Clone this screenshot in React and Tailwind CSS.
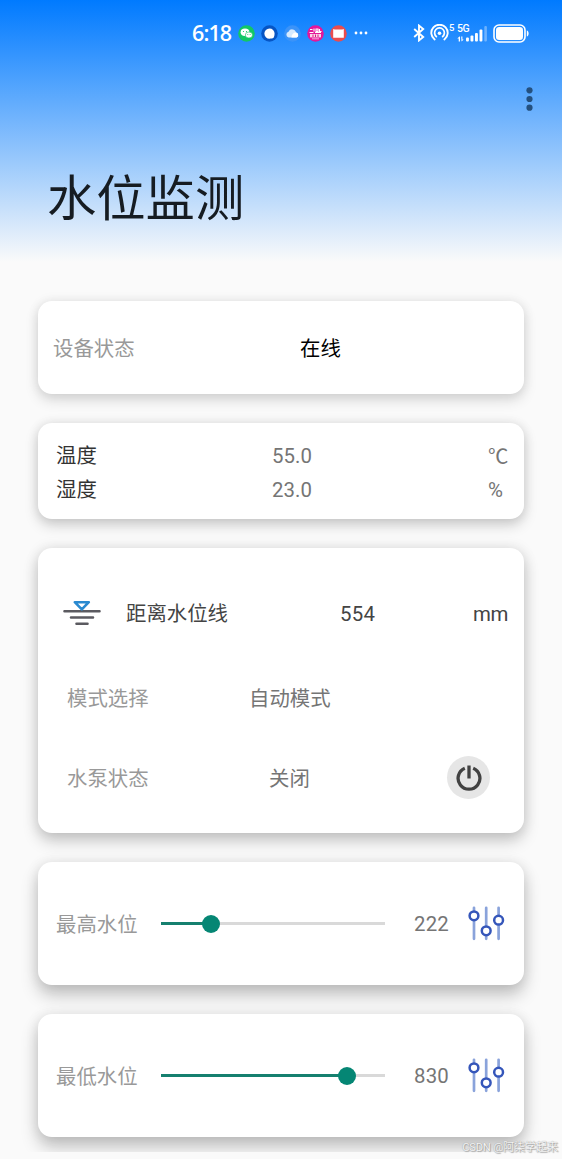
import clsx from 'clsx'

const sliders = [
  { label: '最高水位', value: 222 },
  { label: '最低水位', value: 830 },
]

const MAX_LEVEL = 1000

function StatusBar() {
  return (
    <div className="h-[66px] pl-[192px] pr-[32px] flex items-center text-white">
      <span className="w-[46px] font-['Open_Sans',sans-serif] text-[21.5px] leading-none font-semibold tracking-[-0.9px]">6:18</span>
      <div className="flex items-center gap-[6px]">
        {/* WeChat */}
        <svg className="w-[17px] h-[17px]" viewBox="0 0 17 17">
          <circle cx="8.5" cy="8.5" r="8.3" fill="#12c765" />
          <ellipse cx="7" cy="7.3" rx="4.4" ry="3.7" fill="#fff" />
          <ellipse cx="10.9" cy="10" rx="3.6" ry="3" fill="#fff" stroke="#12c765" strokeWidth="0.6" />
          <circle cx="5.5" cy="6.5" r="0.6" fill="#12c765" />
          <circle cx="8.5" cy="6.5" r="0.6" fill="#12c765" />
          <circle cx="9.8" cy="9.5" r="0.5" fill="#12c765" />
          <circle cx="12.1" cy="9.5" r="0.5" fill="#12c765" />
        </svg>
        <svg className="w-[17px] h-[17px]" viewBox="0 0 17 17">
          <circle cx="8.5" cy="8.5" r="8.3" fill="#0655c4" />
          <path d="M8.5 3.4a5.1 5.1 0 0 1 5.1 5.1c0 1.6-.3 3-1 4.3-1.1.8-2.5.9-4.1.9a5.1 5.1 0 0 1 0-10.3z" fill="#fff" />
        </svg>
        <svg className="w-[17px] h-[17px]" viewBox="0 0 17 17">
          <circle cx="8.5" cy="8.5" r="8.3" fill="#3b93f8" />
          <path d="M4.7 12.6a3 3 0 0 1-.2-5.8 4 4 0 0 1 7.6.8 2.6 2.6 0 0 1 .4 5z" fill="#d6eafe" />
          <path d="M7.5 12.6a4.5 4.5 0 0 1 4.6-5 2.6 2.6 0 0 1 .4 5z" fill="#fff" />
        </svg>
        <svg className="w-[17px] h-[17px]" viewBox="0 0 17 17">
          <circle cx="8.5" cy="8.5" r="8.3" fill="#e5179a" />
          <path d="M3 4.5h2.5M7 3.5v3M9 4h2v2.4H9zM12.5 4v2.5h2M2.5 7.5h4M8 7.5h6" fill="none" stroke="#fff" strokeWidth="1.1" />
          <path d="M3 9h11v3.4H3z" fill="#fbd3ec" />
          <path d="M6 9.5v2.5M8.5 9.5v2.5M11 9.5v2.5" stroke="#d81a76" strokeWidth="1" />
          <path d="M5 13.8h7" stroke="#f9a7d8" strokeWidth="1" />
        </svg>
        <svg className="w-[17px] h-[17px]" viewBox="0 0 17 17">
          <circle cx="8.5" cy="8.5" r="8.3" fill="#ea4c4e" />
          <path d="M3.2 4.1c1.2.4 2 .5 3 .5h4.6c1 0 1.8-.1 3-.5v8.6H3.2z" fill="#fff" />
        </svg>
      </div>
      <svg className="w-[14px] h-[4px] ml-[7px]" viewBox="0 0 14 4" fill="#fff">
        <circle cx="2" cy="2" r="1.4" />
        <circle cx="7" cy="2" r="1.4" />
        <circle cx="12" cy="2" r="1.4" />
      </svg>

      <div className="ml-auto flex items-center">
        <svg className="w-[12px] h-[18px]" viewBox="0 0 12 18" fill="none" stroke="#fff" strokeWidth="1.9">
          <path d="M1.2 5l9 8-4.2 3.4V1.6L10.2 5l-9 8" />
        </svg>
        <svg className="w-[19px] h-[18px] ml-[5px]" viewBox="0 0 19 18" fill="none" stroke="#fff" strokeLinecap="round">
          <path d="M4.6 15.5a8.2 8.2 0 1 1 9.8 0" strokeWidth="1.9" />
          <path d="M6.4 12.6a4.9 4.9 0 1 1 6.2 0" strokeWidth="1.7" />
          <circle cx="9.5" cy="9.2" r="1.8" fill="#fff" stroke="none" />
        </svg>
        <span className="w-[8px] h-[18px] text-[9.5px] leading-[8px] font-medium">5</span>
        <div className="w-[31px] flex flex-col">
          <span className="h-[9px] text-[10.5px] leading-[7px] font-medium tracking-[-0.5px]">5G</span>
          <svg className="w-[31px] h-[16px] -mt-[8px]" viewBox="0 0 31 16" fill="#fff">
            <path d="M2.5 10.5l-2.2 2h1.4v3H3v-5zM4.500 15.500l2.200-2H5.400v-3H4.200z" />
            <rect x="9" y="11.5" width="2.9" height="4" rx="1" />
            <rect x="13.5" y="9.5" width="2.9" height="6" rx="1" />
            <rect x="18" y="7" width="2.9" height="8.5" rx="1" />
            <rect x="22.5" y="3.5" width="2.9" height="12" rx="1" />
            <rect x="27.3" y="0" width="2.6" height="15.5" rx="1" opacity="0.35" />
          </svg>
        </div>
        <svg className="w-[37px] h-[19px] ml-[5px]" viewBox="0 0 37 19" fill="none">
          <rect x="1" y="1" width="31" height="17" rx="5" stroke="#fff" strokeWidth="1.6" />
          <rect x="3" y="3" width="27" height="13" rx="3.2" fill="#fff" />
          <path d="M33.8 6.5c2.4.4 2.4 5.6 0 6z" fill="#fff" />
        </svg>
      </div>
    </div>
  )
}

function Card({ className, children }) {
  return (
    <section className={clsx('bg-white rounded-[14px]', className)}>
      {children}
    </section>
  )
}

function WaterLevelIcon() {
  return (
    <svg className="w-[38px] h-[26px] -translate-y-px" viewBox="0 0 38 26" fill="none" strokeLinecap="round">
      <path d="M1.5 11.3h35M8 17.5h22M13.5 23.8h11" stroke="#5b5a60" strokeWidth="2.6" />
      <path d="M11.8 2.2h14L18.8 9.4z" stroke="#2a8ad0" strokeWidth="2.6" strokeLinejoin="round" />
    </svg>
  )
}

function PowerIcon() {
  return (
    <svg className="w-[26px] h-[26px]" viewBox="0 0 26 26" fill="none" stroke="#424242" strokeWidth="3.3">
      <path d="M8.8 3.2a10.9 10.9 0 1 0 8.4 0" />
      <path d="M13 .5v13" />
    </svg>
  )
}

function TuneIcon() {
  return (
    <svg className="w-[37px] h-[36px]" viewBox="0 0 37 36" fill="none">
      <path d="M6 1.8v31M18.2 1.8v31M30.6 1.8v31" stroke="#8aa3db" strokeWidth="2.7" strokeLinecap="round" />
      <g fill="#fff" stroke="#3556ba" strokeWidth="2.5">
        <circle cx="6" cy="9.8" r="4.4" />
        <circle cx="18.2" cy="24.8" r="4.4" />
        <circle cx="30.6" cy="14.2" r="4.4" />
      </g>
    </svg>
  )
}

function Slider({ value }) {
  const pct = `${(value / MAX_LEVEL) * 100}%`
  return (
    <div className="relative w-[224px] h-[18px] flex items-center">
      <div className="w-full h-[3px] bg-[#d9d9d9]">
        <div className="h-full bg-[#16806f]" style={{ width: pct }} />
      </div>
      <div className="absolute w-[18px] h-[18px] -translate-x-1/2 rounded-full bg-[#058674]" style={{ left: pct }} />
    </div>
  )
}

export default function App() {
  return (
    <div className="relative w-[562px] h-[1159px] overflow-hidden bg-[#fafafa] font-['Roboto','Noto_Sans_CJK_SC',sans-serif] text-[20.4px] leading-[34px]">
      <div className="h-[1152px] overflow-hidden bg-[linear-gradient(to_bottom,#007aff_0px,#fafafa_262px)] bg-[#fafafa]">
        <header className="h-[301px]">
          <StatusBar />
          <div className="h-[66px] pr-[29px] flex justify-end items-center">
            <svg className="w-[7px] h-[24px]" viewBox="0 0 7 24" fill="#24507f">
              <circle cx="3.5" cy="3.3" r="3.1" />
              <circle cx="3.5" cy="12" r="3.1" />
              <circle cx="3.5" cy="20.7" r="3.1" />
            </svg>
          </div>
          <h1 className="pl-[47px] pt-[31px] text-[49.3px] leading-[73px] text-[#161c22]">水位监测</h1>
        </header>

        <main className="mx-[38px] flex flex-col gap-[29px]">
          <Card className="h-[93px] pt-[2px] pl-[15px] flex items-center text-black shadow-[0_6px_14px_rgba(0,0,0,0.14),0_0_12px_rgba(0,0,0,0.08)]">
            <span className="w-[247px] text-[#999]">设备状态</span>
            <span>在线</span>
          </Card>

          <Card className="h-[96px] pt-[3px] pl-[18px] pr-[14px] flex flex-col justify-center text-[#757575] shadow-[0_6px_14px_rgba(0,0,0,0.18),0_0_12px_rgba(0,0,0,0.09)]">
            <div className="flex">
              <span className="w-[216px] text-[#333]">温度</span>
              <span className="tracking-[0.1px]">55.0</span>
              <span className="w-[22px] ml-auto font-['Noto_Sans_CJK_SC',sans-serif] -translate-y-px">℃</span>
            </div>
            <div className="flex">
              <span className="w-[216px] text-[#333]">湿度</span>
              <span className="tracking-[0.1px]">23.0</span>
              <span className="w-[22px] ml-auto">%</span>
            </div>
          </Card>

          <Card className="h-[285px] pt-[49px] text-[#757575] shadow-[0_8px_16px_rgba(0,0,0,0.2),0_0_14px_rgba(0,0,0,0.1)]">
            <div className="pl-[25px] pr-[16px] flex items-center text-[#444]">
              <WaterLevelIcon />
              <span className="w-[214px] ml-[25px]">距离水位线</span>
              <span className="tracking-[0.3px]">554</span>
              <span className="ml-auto tracking-[-0.4px]">mm</span>
            </div>
            <div className="mt-[51px] pl-[29px] flex items-center">
              <span className="w-[182px] text-[#999]">模式选择</span>
              <span>自动模式</span>
            </div>
            <div className="mt-[40px] pl-[29px] pr-[34px] flex items-center">
              <span className="w-[202px] pt-[2px] text-[#999]">水泵状态</span>
              <span className="pt-[2px]">关闭</span>
              <button className="w-[43px] h-[43px] ml-auto flex items-center justify-center rounded-full bg-[#e6e6e6]">
                <PowerIcon />
              </button>
            </div>
          </Card>

          {sliders.map(s => (
            <Card key={s.label} className="h-[123px] pl-[18px] pr-[19px] flex items-center shadow-[0_10px_17px_rgba(0,0,0,0.23),0_0_14px_rgba(0,0,0,0.09)]">
              <span className="w-[105px] pt-[2px] text-[#999]">{s.label}</span>
              <Slider value={s.value} />
              <span className="ml-[29px] pt-px tracking-[0.2px] text-[#757575]">{s.value}</span>
              <div className="ml-auto">
                <TuneIcon />
              </div>
            </Card>
          ))}
        </main>
      </div>

      <span className="absolute right-[4px] bottom-[3px] text-[11.2px] leading-[16px] tracking-[-0.2px] text-[#f4f4f4] [text-shadow:0_0_1px_#888,1px_1px_1px_#aaa]">CSDN @阿柒学起来</span>
    </div>
  )
}
